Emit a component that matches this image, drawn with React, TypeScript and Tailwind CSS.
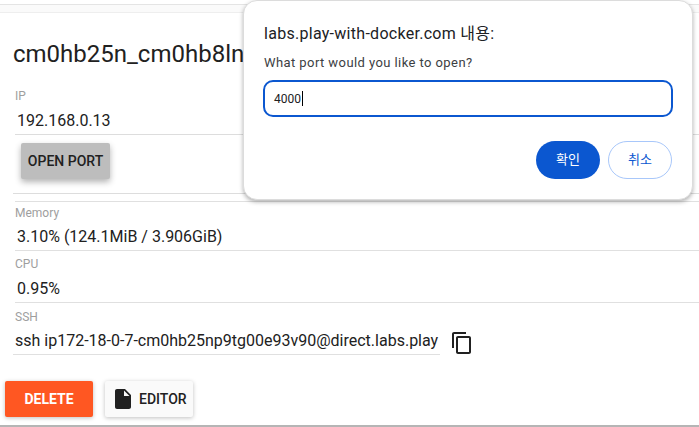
function Field({ label, value, className }: { label: string; value: string; className: string }) {
  return (
    <div className={`border-b border-[#e0e0e0] ${className}`}>
      <label className="block text-[12px] leading-[14px] text-[#9e9e9e]">{label}</label>
      <div className="pl-[2px] text-[16px] leading-[24px] text-[#212121]">{value}</div>
    </div>
  );
}

function PromptDialog() {
  return (
    <div className="absolute left-[243px] top-0 h-[200px] w-[450px] rounded-[14px] border border-[#dcdcdc] bg-white px-[19px] shadow-[0_2px_4px_rgba(0,0,0,0.3)]">
      <div className="mt-[22px] pl-[1px] text-[16px] leading-[22px] tracking-[0.28px] text-[#202124]">
        labs.play-with-docker.com 내용:
      </div>
      <div className="mt-[9px] pl-[1px] text-[13px] leading-[18px] tracking-[0.42px] text-[#3c4043]">
        What port would you like to open?
      </div>
      <div className="mt-[8px] flex h-[37px] items-center rounded-[10px] border-2 border-[#0b57d0] pl-[9px] text-[12px] text-[#202124]">
        4000
        <span className="ml-[1px] h-[15px] w-px bg-black" />
      </div>
      <div className="mt-[24px] flex justify-end gap-[8px] pr-[1px]">
        <button className="h-[38px] w-[64px] rounded-full bg-[#0b57d0] text-[13px] text-white">확인</button>
        <button className="h-[38px] w-[64px] rounded-full border border-[#a8c7fa] bg-white text-[13px] text-[#0b57d0]">취소</button>
      </div>
    </div>
  );
}

export default function App() {
  return (
    <div
      className="relative h-[427px] w-[699px] overflow-hidden bg-white"
      style={{ fontFamily: 'Roboto, "Noto Sans CJK KR", sans-serif' }}
    >
      <div className="h-[4px] bg-white" />
      <div className="h-[9px] border-t border-[#e4e4e4] border-b border-b-[#eeeeee] bg-[#fafafa]" />

      <div className="h-[414px] border-b-2 border-[#b5b5b5]">
        <h1 className="pl-[13px] pt-[27px] text-[24px] leading-[28px] font-normal whitespace-nowrap text-[#212121]">
          cm0hb25n_cm0hb8ln
        </h1>

        <div className="mt-[21px] ml-[15px] h-[46px] border-b border-[#dddddd]">
          <label className="block text-[12px] leading-[14px] text-[#9e9e9e]">IP</label>
          <div className="mt-[6px] pl-[2px] text-[16px] leading-[24px] text-[#212121]">192.168.0.13</div>
        </div>

        <div className="ml-[13px] h-[59px] border-b border-[#dddddd] pl-[8px] pt-[8px]">
          <button className="h-[36px] w-[89px] rounded-[2px] bg-[#bdbdbd] text-[14px] font-medium text-[#212121] shadow-[0_3px_6px_rgba(0,0,0,0.3)]">
            OPEN PORT
          </button>
        </div>

        <div className="mt-[7px] ml-[15px] border-t border-[#e0e0e0]">
          <Field label="Memory" value="3.10% (124.1MiB / 3.906GiB)" className="h-[49px] pt-[4px] [&>div]:mt-[5px]" />
          <Field label="CPU" value="0.95%" className="h-[52px] pt-[6px] [&>div]:mt-[6px]" />
        </div>

        <div className="ml-[13px] flex items-start">
          <div className="h-[52px] w-[427px] overflow-hidden border-b border-[#e0e0e0] pl-[2px]">
            <label className="block pt-[7px] text-[12px] leading-[14px] text-[#9e9e9e]">SSH</label>
            <div className="mt-[5px] text-[16px] leading-[24px] whitespace-nowrap text-[#212121]">
              ssh ip172-18-0-7-cm0hb25np9tg00e93v90@direct.labs.play
            </div>
          </div>
          <svg viewBox="0 0 24 24" className="mt-[28px] ml-[10px] h-[24px] w-[24px] fill-[#212121]">
            <path d="M16 1H4c-1.1 0-2 .9-2 2v14h2V3h12V1zm3 4H8c-1.1 0-2 .9-2 2v14c0 1.1.9 2 2 2h11c1.1 0 2-.9 2-2V7c0-1.1-.9-2-2-2zm0 16H8V7h11v14z" />
          </svg>
        </div>

        <div className="mt-[26px] ml-[5px] flex gap-[12px]">
          <button className="h-[36px] w-[88px] rounded-[2px] bg-[#ff5722] text-[14px] font-bold text-white shadow-[0_1px_4px_rgba(0,0,0,0.25)]">
            DELETE
          </button>
          <button className="flex h-[36px] w-[88px] items-center rounded-[2px] bg-[#fafafa] pl-[6px] text-[14px] font-medium text-[#212121] shadow-[0_1px_4px_rgba(0,0,0,0.25)]">
            <svg viewBox="0 0 24 24" className="h-[24px] w-[24px] fill-[#212121]">
              <path d="M6 2c-1.1 0-2 .9-2 2v16c0 1.1.9 2 2 2h12c1.1 0 2-.9 2-2V8l-6-6H6zm7 7V3.5L18.5 9H13z" />
            </svg>
            <span className="ml-[4px]">EDITOR</span>
          </button>
        </div>
      </div>

      <PromptDialog />
    </div>
  );
}
